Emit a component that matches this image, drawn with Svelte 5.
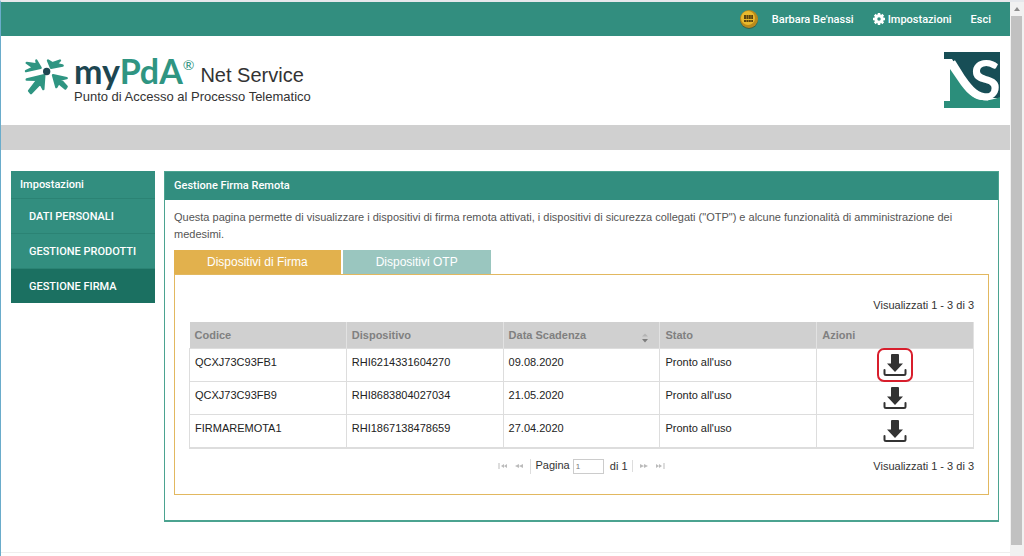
<script lang="ts">
  interface Device {
    codice: string;
    dispositivo: string;
    scadenza: string;
    stato: string;
  }

  const menu = ['Dati personali', 'Gestione prodotti', 'Gestione firma'];
  const tabs = ['Dispositivi di Firma', 'Dispositivi OTP'];

  const devices: Device[] = [
    { codice: 'QCXJ73C93FB1', dispositivo: 'RHI6214331604270', scadenza: '09.08.2020', stato: "Pronto all'uso" },
    { codice: 'QCXJ73C93FB9', dispositivo: 'RHI8683804027034', scadenza: '21.05.2020', stato: "Pronto all'uso" },
    { codice: 'FIRMAREMOTA1', dispositivo: 'RHI1867138478659', scadenza: '27.04.2020', stato: "Pronto all'uso" },
  ];

  let activeMenu = $state('Gestione firma');
  let activeTab = $state('Dispositivi di Firma');
  let selected = $state('QCXJ73C93FB1');
  let page = $state('1');
</script>

<div class="window">
  <div class="page">
    <nav class="topbar">
      <svg class="coin" viewBox="0 0 20 20" aria-hidden="true">
        <circle cx="10" cy="11" r="9" fill="#38614a" />
        <circle cx="10" cy="10" r="9" fill="#b98a1c" />
        <circle cx="9" cy="9" r="7" fill="#e8b92e" />
        <path d="M5 7h9M5 9h9M5 12h9" stroke="#59430f" stroke-width="2" stroke-dasharray="2 .4" />
      </svg>
      <a href="#utente">Barbara Be'nassi</a>
      <a href="#impostazioni" class="settings">
        <svg viewBox="0 0 24 24" aria-hidden="true">
          <circle cx="12" cy="12" r="6.500" fill="none" stroke="#fff" stroke-width="6" />
          <path d="M12 0v5M12 19v5M0 12h5M19 12h5M3.500 3.500l3.500 3.500M17 17l3.500 3.500M3.500 20.500l3.500-3.500M17 7l3.500-3.500" stroke="#fff" stroke-width="5" />
        </svg>
        Impostazioni
      </a>
      <a href="#esci">Esci</a>
    </nav>

    <header class="header">
      <div class="brand">
        <svg class="burst" viewBox="72 174 132 110" aria-hidden="true">
          <g fill="#2f9582" stroke="#2f9582" stroke-width="7" stroke-linejoin="round">
            <path d="M109 181l13 22-44 10 22-11-20-14 31 5z" />
            <path d="M144 181l9 22 35-7-18-5 10-10-22 8z" />
            <path d="M80 238l53-13-3 42-9-17-28 29-6-7 25-33z" />
            <path d="M200 234l-41-9 10 36 7-12 20 16 4-6-19-21z" />
          </g>
          <circle cx="140" cy="214" r="11" fill="#1d4651" />
        </svg>
        <div class="brand-text">
          <div class="brand-line">
            <span class="logo"><span class="my">my</span>PdA<sup>®</sup></span>
            <h1>Net Service</h1>
          </div>
          <p>Punto di Accesso al Processo Telematico</p>
        </div>
      </div>
      <svg class="mark" viewBox="0 0 56 56" role="img" aria-label="Net Service">
        <path d="M0 0H56V46L43 46C32 43 27 37 20 27L8 7H0Z" fill="#174e56" />
        <path d="M0 49H6V17L17 33C28 48 38 52 56 45V56H0Z" fill="#2b8e7b" />
        <path d="M8 10L18 26C27 39 33 45 44 45" fill="none" stroke="#fff" stroke-width="7" />
        <text x="26" y="48" font-family="Lato, sans-serif" font-size="56" font-weight="700" fill="#fff">S</text>
      </svg>
    </header>

    <div class="strip"></div>

    <main class="content">
      <aside class="sidebar">
        <h2>Impostazioni</h2>
        {#each menu as item (item)}
          <button class:active={activeMenu === item} onclick={() => (activeMenu = item)}>{item}</button>
        {/each}
      </aside>

      <section class="panel">
        <h2>Gestione Firma Remota</h2>
        <div class="panel-body">
          <p class="intro">
            Questa pagina permette di visualizzare i dispositivi di firma remota attivati, i dispositivi di sicurezza
            collegati ("OTP") e alcune funzionalità di amministrazione dei medesimi.
          </p>

          <div class="tabs" role="tablist">
            {#each tabs as tab (tab)}
              <button
                role="tab"
                aria-selected={activeTab === tab}
                class:active={activeTab === tab}
                onclick={() => (activeTab = tab)}
              >{tab}</button>
            {/each}
          </div>

          <div class="tab-body">
            <div class="count">Visualizzati 1 - 3 di 3</div>
            <table>
              <thead>
                <tr>
                  <th>Codice</th>
                  <th>Dispositivo</th>
                  <th>
                    <div class="sortable">
                      Data Scadenza
                      <svg viewBox="0 0 8 10" aria-hidden="true">
                        <path d="M1 3.500l3-3 3 3z" fill="#b4b4b4" />
                        <path d="M1 6h6L4 9.500z" fill="#7d7d7d" />
                      </svg>
                    </div>
                  </th>
                  <th>Stato</th>
                  <th>Azioni</th>
                </tr>
              </thead>
              <tbody>
                {#each devices as device (device.codice)}
                  <tr>
                    <td>{device.codice}</td>
                    <td>{device.dispositivo}</td>
                    <td>{device.scadenza}</td>
                    <td>{device.stato}</td>
                    <td class="actions">
                      <button
                        aria-label="Scarica"
                        class:selected={selected === device.codice}
                        onclick={() => (selected = device.codice)}
                      >
                        <svg viewBox="0 0 24 24" aria-hidden="true">
                          <path d="M8 2Q8 1 9 1h6Q16 1 16 2v8.500H20L12 19 4 10.500h4z" fill="#333" />
                          <path d="M1.500 17v3.500Q1.500 22 3 22h18q1.500 0 1.500-1.500V17" fill="none" stroke="#333" stroke-width="2" stroke-linecap="round" />
                        </svg>
                      </button>
                    </td>
                  </tr>
                {/each}
              </tbody>
            </table>

            <div class="footer">
              <div class="pager">
                <button aria-label="Prima pagina" disabled>
                  <svg viewBox="0 0 10 8"><path d="M1 1v6" stroke="#bbb" /><path d="M6 2v4L3 4zM9 2v4L6 4z" fill="#bbb" /></svg>
                </button>
                <button aria-label="Pagina precedente" disabled>
                  <svg viewBox="0 0 10 8"><path d="M5 2v4L1 4zM9 2v4L5 4z" fill="#bbb" /></svg>
                </button>
                <label>Pagina <input type="text" bind:value={page} /></label>
                <span class="total">di 1</span>
                <button aria-label="Pagina successiva" disabled>
                  <svg viewBox="0 0 10 8"><path d="M1 2v4l4-2zM5 2v4l4-2z" fill="#bbb" /></svg>
                </button>
                <button aria-label="Ultima pagina" disabled>
                  <svg viewBox="0 0 10 8"><path d="M1 2v4l3-2zM4 2v4l3-2z" fill="#bbb" /><path d="M9 1v6" stroke="#bbb" /></svg>
                </button>
              </div>
              <div class="count">Visualizzati 1 - 3 di 3</div>
            </div>
          </div>
        </div>
      </section>
    </main>
    <div class="bottom-line"></div>
  </div>

  <div class="scrollbar" aria-hidden="true">
    <svg viewBox="0 0 14 14"><path d="M4 9l3-4 3 4z" fill="#8c8c8c" /></svg>
    <div class="thumb"></div>
  </div>
</div>

<style>
  :global(body) {
    background: #fff;
    font-family: 'Liberation Sans', Arial, sans-serif;
    font-size: 11px;
    color: #333;
  }

  h1,
  h2,
  p {
    margin: 0;
  }

  button {
    font: inherit;
    border: 0;
    padding: 0;
    margin: 0;
    background: none;
    cursor: pointer;
  }

  .window {
    box-sizing: border-box;
    display: flex;
    min-height: 100vh;
    border-top: 2px solid #e6e8ec;
    border-left: 1px solid #6aaccb;
  }

  .page {
    flex: 1;
    min-width: 0;
  }

  .topbar {
    display: flex;
    align-items: center;
    justify-content: flex-end;
    height: 34px;
    padding-right: 19px;
    background: #328e7f;
    font-family: Roboto, Arial, sans-serif;
  }

  .topbar a {
    color: #fff;
    font-weight: 500;
    text-decoration: none;
    margin-left: 19px;
  }

  .coin {
    width: 20px;
    height: 20px;
    margin-right: -6px;
  }

  .settings {
    display: flex;
    align-items: center;
    gap: 3px;
  }

  .settings svg {
    width: 12px;
    height: 12px;
  }

  .header {
    display: flex;
    justify-content: space-between;
    align-items: flex-start;
    padding: 16px 10px 17px 23px;
  }

  .brand {
    display: flex;
    gap: 6px;
  }

  .burst {
    width: 44px;
    height: 37px;
    margin-top: 6px;
  }

  .brand-line {
    display: flex;
    align-items: flex-end;
    height: 37px;
  }

  .logo {
    font-family: Lato, sans-serif;
    font-size: 34px;
    font-weight: 700;
    line-height: 36px;
    color: #2f9582;
  }

  .logo sup {
    font-size: 14px;
    font-weight: 400;
    line-height: 0;
    vertical-align: 14px;
  }

  .my {
    color: #1d4651;
  }

  h1 {
    margin-left: 6px;
    font-size: 20px;
    font-weight: 400;
    line-height: 28px;
  }

  .brand p {
    font-size: 13px;
    line-height: 16px;
  }

  .mark {
    width: 56px;
    height: 56px;
    overflow: visible;
  }

  .strip {
    height: 25px;
    background: #d0d0d0;
  }

  .content {
    display: flex;
    align-items: flex-start;
    gap: 9px;
    padding: 21px 11px 30px 10px;
  }

  .sidebar {
    display: flex;
    flex-direction: column;
    flex: 0 0 144px;
    background: #328e7f;
    color: #fff;
    font-family: Roboto, Arial, sans-serif;
  }

  .sidebar h2,
  .panel h2 {
    padding: 0 9px;
    font-family: Roboto, Arial, sans-serif;
    font-size: 11px;
    font-weight: 500;
    line-height: 28px;
    color: #fff;
  }

  .sidebar h2 {
    line-height: 27px;
  }

  .sidebar button {
    box-sizing: border-box;
    height: 35px;
    padding-left: 18px;
    border-top: 1px solid #2b8374;
    text-align: left;
    text-transform: uppercase;
    font-weight: 500;
    color: #fff;
  }

  .sidebar .active {
    background: #1b7061;
  }

  .panel {
    flex: 1;
    min-width: 0;
    border: 1px solid #4ba390;
    border-bottom-width: 2px;
  }

  .panel h2 {
    background: #328e7f;
  }

  .panel-body {
    padding: 9px 9px 25px;
  }

  .intro {
    line-height: 17px;
    padding-right: 20px;
    color: #555;
  }

  .tabs {
    display: flex;
    gap: 2px;
    padding-top: 7px;
  }

  .tabs button {
    height: 24px;
    padding: 0 33px;
    font-size: 12px;
    color: #fff;
    background: #9ac6bf;
  }

  .tabs .active {
    background: #e2b14d;
  }

  .tab-body {
    padding: 20px 14px 18px;
    border: 1px solid #e2b860;
  }

  .count {
    line-height: 20px;
    text-align: right;
  }

  table {
    width: 100%;
    margin-top: 7px;
    border-collapse: collapse;
    table-layout: fixed;
    border-bottom: 2px solid #ddd;
  }

  th {
    height: 26px;
    padding: 0 5px;
    border-right: 1px solid #e2e2e2;
    background: #d0d0d0;
    text-align: left;
    font-weight: 700;
    color: #808080;
  }

  td {
    box-sizing: border-box;
    height: 33px;
    padding: 6px 5px;
    border: 1px solid #ddd;
    vertical-align: top;
    line-height: 14px;
    color: #222;
  }

  .sortable {
    display: flex;
    align-items: center;
    justify-content: space-between;
  }

  .sortable svg {
    width: 8px;
    height: 10px;
    margin-top: 6px;
    margin-right: 5px;
  }

  .actions {
    padding: 2px 0;
  }

  .actions button {
    display: flex;
    align-items: center;
    justify-content: center;
    width: 30px;
    height: 28px;
    margin: 0 auto;
    border-radius: 4px;
  }

  .actions .selected {
    outline: 2px solid #d81e2c;
    outline-offset: 1px;
  }

  .actions svg {
    width: 24px;
    height: 24px;
  }

  .footer {
    display: grid;
    grid-template-columns: 1fr auto 1fr;
    align-items: center;
    padding-top: 7px;
  }

  .pager {
    grid-column: 2;
    display: flex;
    align-items: center;
    gap: 6px;
  }

  .pager button {
    width: 10px;
    height: 8px;
    display: flex;
  }

  .pager label {
    padding-left: 4px;
    border-left: 1px solid #ddd;
  }

  .pager .total {
    padding-right: 4px;
    border-right: 1px solid #ddd;
  }

  .pager input {
    box-sizing: border-box;
    width: 31px;
    height: 15px;
    padding: 0 2px;
    border: 1px solid #ccc;
    font-family: inherit;
    font-size: 8px;
    color: #777;
  }

  .bottom-line {
    border-top: 1px solid #eee;
  }

  .scrollbar {
    flex: 0 0 14px;
    display: flex;
    flex-direction: column;
    background: #f1f1f1;
  }

  .scrollbar svg {
    width: 14px;
    height: 14px;
  }

  .thumb {
    flex: 1;
    margin: 0 2px 11px 1px;
    background: #c1c1c1;
  }
</style>
